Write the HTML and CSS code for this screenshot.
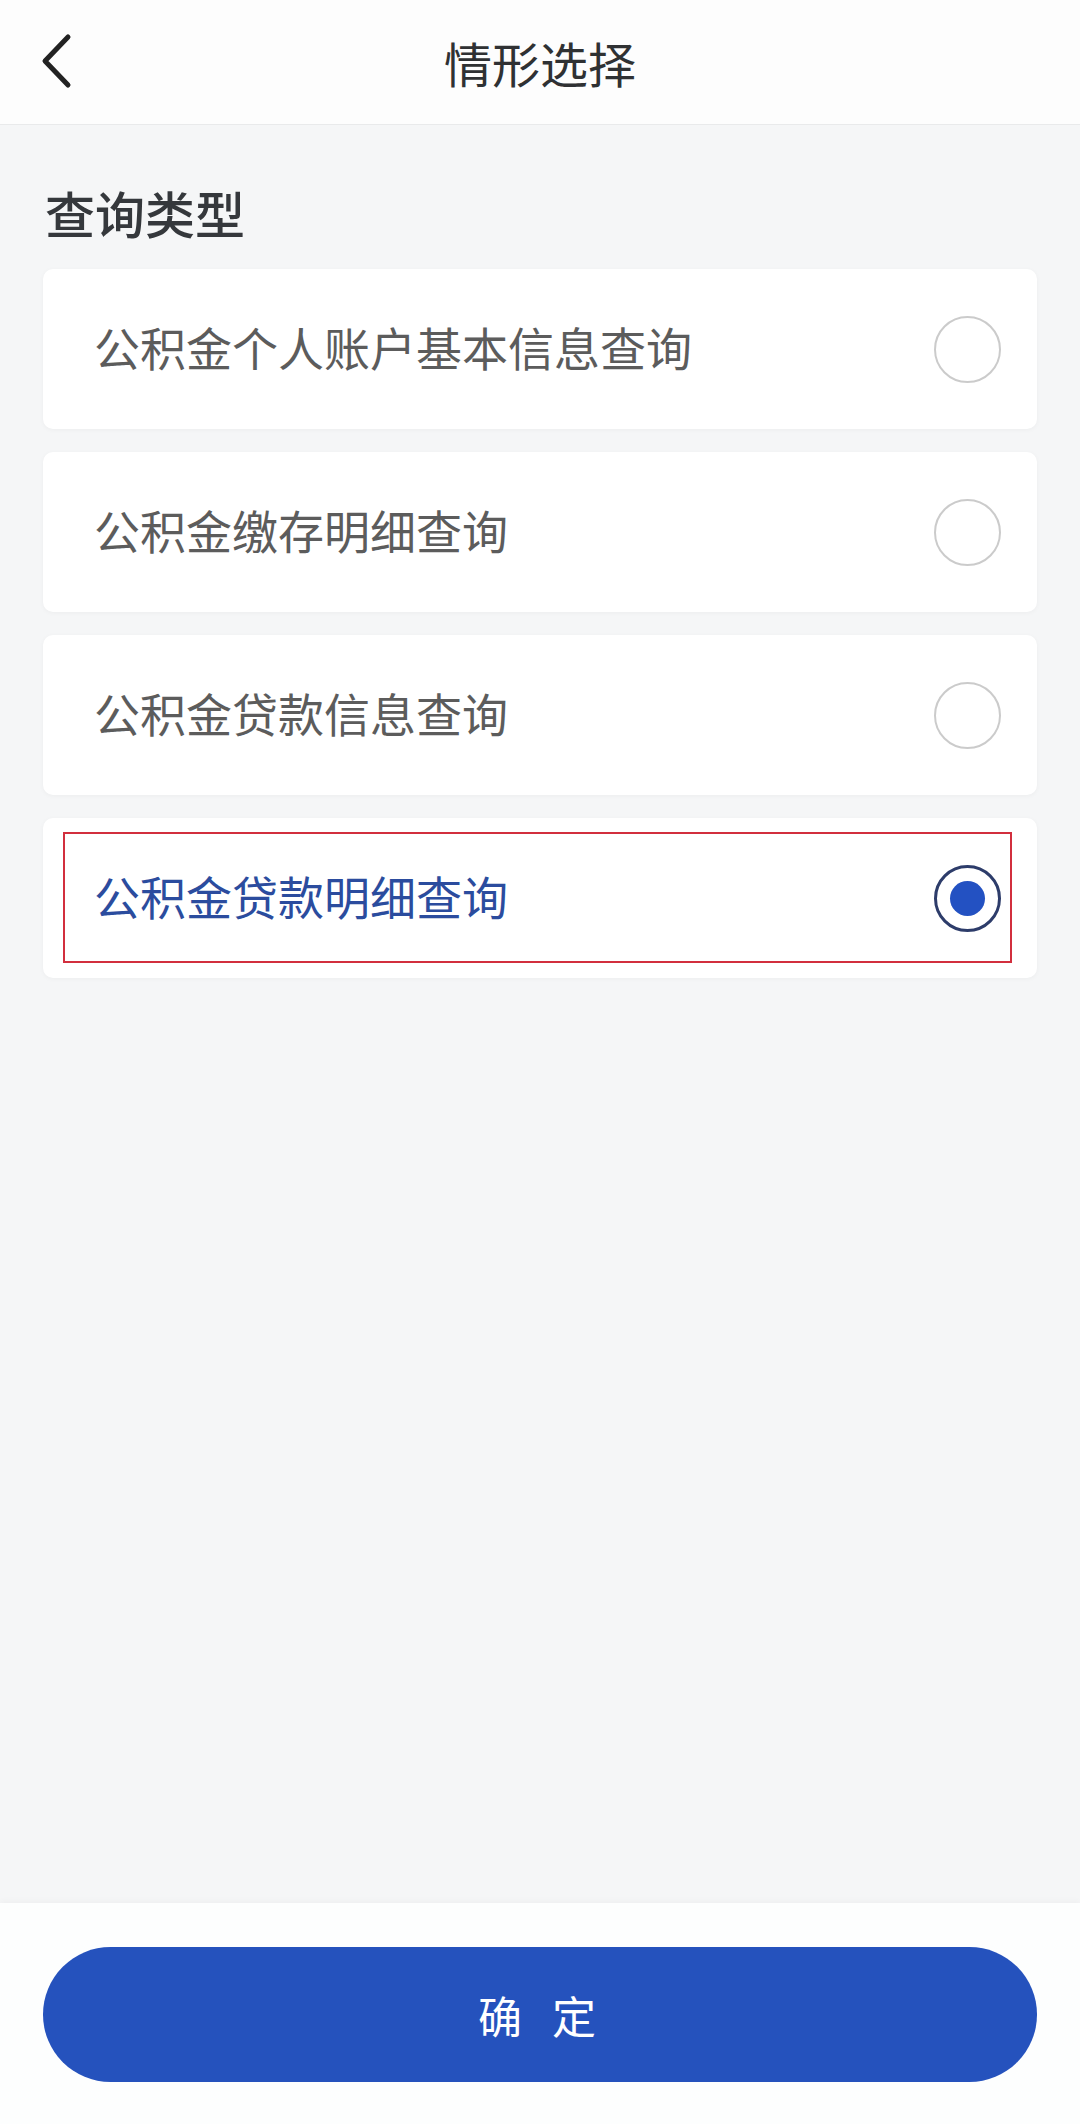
FILE: index.html
```html
<!DOCTYPE html>
<html lang="zh-CN">
<head>
    <meta charset="UTF-8">
    <meta name="viewport" content="width=device-width, initial-scale=1.0">
    <title>情形选择</title>
    <link rel="stylesheet" href="styles.css">
</head>
<body>
    <div class="page">
        <header class="topbar">
            <span class="back">
                <svg width="40" height="60" viewBox="0 0 40 60">
                    <path d="M30 6 L7 30 L30 54" fill="none" stroke="#222" stroke-width="5" stroke-linecap="round" stroke-linejoin="round"/>
                </svg>
            </span>
            <h1 class="title">情形选择</h1>
        </header>

        <main class="content">
            <h2 class="section-title">查询类型</h2>
            <div class="options">
                <div class="option">
                    <span class="option-text">公积金个人账户基本信息查询</span>
                    <span class="radio"></span>
                </div>
                <div class="option">
                    <span class="option-text">公积金缴存明细查询</span>
                    <span class="radio"></span>
                </div>
                <div class="option">
                    <span class="option-text">公积金贷款信息查询</span>
                    <span class="radio"></span>
                </div>
                <div class="option selected">
                    <span class="option-text">公积金贷款明细查询</span>
                    <span class="radio"></span>
                    <span class="mark"></span>
                </div>
            </div>
        </main>

        <footer class="bottombar">
            <button class="confirm">确定</button>
        </footer>
    </div>
</body>
</html>
```

FILE: styles.css
```css
body {
    margin: 0;
    background: #f5f6f7;
    font-family: "Noto Sans CJK SC", "Noto Sans", sans-serif;
    color: #333;
}

.page {
    display: flex;
    flex-direction: column;
    height: 2124px;
}

.topbar {
    display: flex;
    align-items: center;
    justify-content: center;
    position: relative;
    height: 124px;
    background: #fdfdfd;
    border-bottom: 1px solid #e9eaeb;
}

.back {
    position: absolute;
    left: 38px;
    top: 31px;
    display: flex;
}

.title {
    margin: 0;
    font-size: 48px;
    font-weight: 400;
    color: #2f3133;
}

.content {
    flex: 1;
    padding: 50px 43px 0;
}

.section-title {
    margin: 0 0 20px 2px;
    font-size: 50px;
    line-height: 74px;
    font-weight: 500;
    color: #35383c;
}

.options {
    display: flex;
    flex-direction: column;
    gap: 23px;
}

.option {
    position: relative;
    display: flex;
    align-items: center;
    justify-content: space-between;
    height: 160px;
    padding: 0 36px 0 51px;
    background: #fff;
    border-radius: 10px;
    box-shadow: 0 1px 5px rgba(0, 0, 0, 0.04);
}

.option-text {
    font-size: 46px;
    color: #5c5c5c;
    margin-bottom: 6px;
}

.radio {
    box-sizing: border-box;
    width: 67px;
    height: 67px;
    border: 2px solid #cbcbcb;
    border-radius: 50%;
    display: flex;
    align-items: center;
    justify-content: center;
}

.selected .option-text {
    color: #2b4c9e;
}

.selected .radio {
    border: 3px solid #2d3c6a;
}

.selected .radio::after {
    content: "";
    width: 35px;
    height: 35px;
    border-radius: 50%;
    background: #2351c2;
}

.mark {
    position: absolute;
    top: 14px;
    bottom: 15px;
    left: 20px;
    right: 25px;
    border: 2px solid #d22f3e;
}

.bottombar {
    height: 221px;
    padding: 44px 43px 0;
    box-sizing: border-box;
    background: #fdfefe;
    box-shadow: 0 -2px 6px rgba(0, 0, 0, 0.03);
}

.confirm {
    width: 100%;
    height: 135px;
    border: none;
    border-radius: 68px;
    background: #2552bd;
    color: #fff;
    font-family: "Noto Sans CJK SC", sans-serif;
    font-size: 44px;
    font-weight: 400;
    letter-spacing: 30px;
    padding-left: 30px;
}
```
